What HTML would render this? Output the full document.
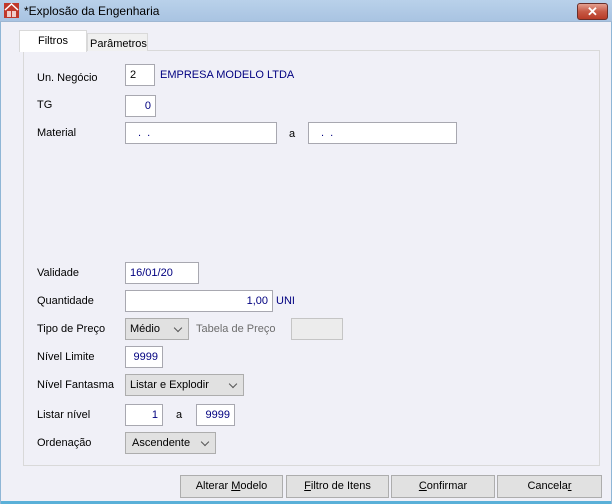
<!DOCTYPE html>
<html><head><style>
*{box-sizing:border-box}
body{margin:0;width:612px;height:504px;overflow:hidden;font-family:"Liberation Sans",sans-serif;font-size:11px;color:#000;background:#f0f0f7;position:relative}
.abs{position:absolute}
.title{left:0;top:0;width:612px;height:22px;background:linear-gradient(#b9d1ea,#a9c4e2);border-bottom:1px solid #9fb7d2}
.inp{position:absolute;background:#fff;border:1px solid #a8a8b0;height:22px;color:#000080;font-size:11px;line-height:20px;padding:0 4px}
.r{text-align:right}
.lbl{position:absolute;font-size:11px;line-height:14px}
.sel{position:absolute;background:#e1e1e1;border:1px solid #adadad;height:22px;line-height:20px;padding:0 4px;font-size:11px}
.sel:after{content:"";position:absolute;right:7px;top:6px;width:5px;height:5px;border-right:1px solid #555;border-bottom:1px solid #555;transform:rotate(45deg)}
.btn{position:absolute;top:475px;height:23px;background:#e1e1e1;border:1px solid #adadad;text-align:center;line-height:21px;font-size:11px}
</style></head><body>
<div class="abs title"></div>
<svg class="abs" style="left:4px;top:3px" width="15" height="15"><rect width="15" height="15" fill="#c0392b"/><path d="M1 7 L7.5 1 L14 7" stroke="#fff" stroke-width="1.5" fill="none"/><path d="M4 14V8M6 14V8M9 14V8M11 14V8" stroke="#fff" stroke-width="1.5"/></svg>
<div class="lbl" style="left:24px;top:4px;font-size:12px">*Explosão da Engenharia</div>
<div class="abs" style="left:577px;top:3px;width:31px;height:17px;border:1px solid #6a2f2a;border-radius:3px;background:linear-gradient(#e3a090,#c75a46 50%,#b83c28);color:#fff;text-align:center;line-height:15px;font-weight:bold;font-size:13px">✕</div>
<div class="abs" style="left:23px;top:50px;width:577px;height:416px;border:1px solid #d9d9d9;background:#f0f0f7"></div>
<div class="abs" style="left:87px;top:33px;width:61px;height:18px;border:1px solid #d9d9d9;border-bottom:none;background:#f0f0f0"></div>
<div class="lbl" style="left:90px;top:37px">Parâmetros</div>
<div class="abs" style="left:19px;top:30px;width:68px;height:22px;border:1px solid #d9d9d9;border-bottom:none;background:#fff"></div>
<div class="lbl" style="left:38px;top:34px">Filtros</div>
<div class="lbl" style="left:37px;top:71px">Un. Negócio</div>
<div class="inp" style="left:125px;top:64px;width:30px;color:#000">2</div>
<div class="lbl" style="left:160px;top:68px;color:#000080">EMPRESA MODELO LTDA</div>
<div class="lbl" style="left:37px;top:98px">TG</div>
<div class="inp r" style="left:125px;top:95px;width:31px">0</div>
<div class="lbl" style="left:37px;top:126px">Material</div>
<div class="inp" style="left:125px;top:122px;width:152px;padding-left:12px">.&nbsp;&nbsp;.</div>
<div class="lbl" style="left:289px;top:127px">a</div>
<div class="inp" style="left:308px;top:122px;width:149px;padding-left:12px">.&nbsp;&nbsp;.</div>
<div class="lbl" style="left:37px;top:266px">Validade</div>
<div class="inp" style="left:125px;top:262px;width:74px">16/01/20</div>
<div class="lbl" style="left:37px;top:294px">Quantidade</div>
<div class="inp r" style="left:125px;top:290px;width:148px">1,00</div>
<div class="lbl" style="left:276px;top:294px;color:#000080">UNI</div>
<div class="lbl" style="left:37px;top:322px">Tipo de Preço</div>
<div class="sel" style="left:125px;top:318px;width:64px">Médio</div>
<div class="lbl" style="left:196px;top:322px;color:#6d6d6d">Tabela de Preço</div>
<div class="abs" style="left:291px;top:318px;width:52px;height:22px;border:1px solid #c5c5c5;background:#ececec"></div>
<div class="lbl" style="left:37px;top:350px">Nível Limite</div>
<div class="inp r" style="left:125px;top:346px;width:38px">9999</div>
<div class="lbl" style="left:37px;top:378px">Nível Fantasma</div>
<div class="sel" style="left:125px;top:374px;width:119px">Listar e Explodir</div>
<div class="lbl" style="left:37px;top:408px">Listar nível</div>
<div class="inp r" style="left:125px;top:404px;width:38px">1</div>
<div class="lbl" style="left:176px;top:408px">a</div>
<div class="inp r" style="left:196px;top:404px;width:39px">9999</div>
<div class="lbl" style="left:37px;top:436px">Ordenação</div>
<div class="sel" style="left:125px;top:432px;width:91px;padding-left:6px">Ascendente</div>
<div class="btn" style="left:180px;width:103px">Alterar <u>M</u>odelo</div>
<div class="btn" style="left:286px;width:103px"><u>F</u>iltro de Itens</div>
<div class="btn" style="left:391px;width:104px"><u>C</u>onfirmar</div>
<div class="btn" style="left:497px;width:105px">Cancela<u>r</u></div>
<div class="abs" style="left:0;top:501px;width:612px;height:3px;background:#5ab0d8"></div>
<div class="abs" style="left:0;top:22px;width:1px;height:482px;background:#8fb6d6"></div>
<div class="abs" style="left:611px;top:22px;width:1px;height:482px;background:#8fb6d6"></div>
</body></html>
